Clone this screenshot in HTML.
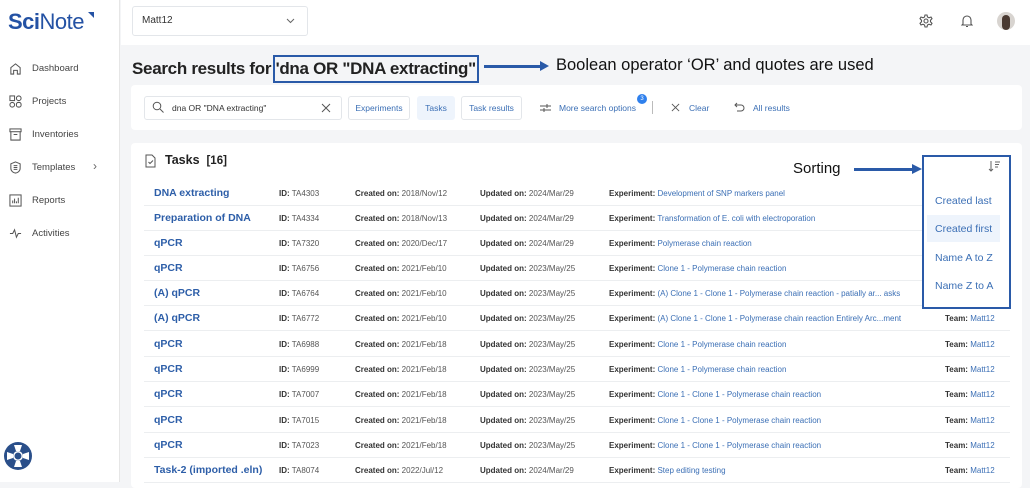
<!DOCTYPE html>
<html><head><meta charset="utf-8"><style>
*{margin:0;padding:0;box-sizing:border-box}
body{width:1030px;height:482px;overflow:hidden;background:#f4f5f7;font-family:"Liberation Sans",sans-serif;position:relative;color:#333}
.a{position:absolute;white-space:nowrap}
.side{position:absolute;left:0;top:0;width:120px;height:482px;background:#fff;border-right:1px solid #e6e6e6}
.nav{position:absolute;left:32px;font-size:9.5px;color:#444}
.ico{position:absolute;left:9px;width:13px;height:13px}
.top{position:absolute;left:121px;top:0;width:909px;height:45px;background:#fff}
.card{position:absolute;background:#fff;border-radius:4px}
.btn{position:absolute;top:96px;height:24px;border:1px solid #e3e6ea;border-radius:3px;font-size:8.5px;color:#3b6fb5;line-height:22px;text-align:center;background:#fff}
.row{position:absolute;left:144px;width:866px;height:25px;border-bottom:1px solid #eceef0;font-size:8px;color:#555}
.row span{position:absolute;top:8px;white-space:nowrap}
.row b{color:#333}
.nm{font-size:10.5px!important;font-weight:bold;color:#2d5ea8;top:6px!important;left:10px}
.lk{color:#3b6fb5;font-style:normal}
</style></head><body>
<div class="side">
<div class="a" style="left:8px;top:9px;font-size:22px;font-weight:bold;color:#2452a4;letter-spacing:-0.5px">Sci<span style="font-weight:normal">Note</span></div>
<div class="a" style="left:88px;top:12px;width:0;height:0;border-top:6px solid #2452a4;border-left:6px solid transparent"></div>
<svg class="ico" style="top:62px" viewBox="0 0 14 14" fill="none" stroke="#555" stroke-width="1.1"><path d="M2 13V6l5-4 5 4v7H9V9H5v4z"/></svg>
<div class="nav" style="top:63px">Dashboard</div>
<svg class="ico" style="top:95px" viewBox="0 0 14 14" fill="none" stroke="#555" stroke-width="1.1"><rect x="1" y="1" width="5" height="5"/><circle cx="10.5" cy="3.5" r="2.5"/><circle cx="3.5" cy="10.5" r="2.5"/><rect x="8" y="8" width="5" height="5" rx="2"/></svg>
<div class="nav" style="top:96px">Projects</div>
<svg class="ico" style="top:128px" viewBox="0 0 14 14" fill="none" stroke="#555" stroke-width="1.1"><rect x="1" y="1" width="12" height="3"/><path d="M2 4v9h10V4M5 7h4"/></svg>
<div class="nav" style="top:129px">Inventories</div>
<svg class="ico" style="top:161px" viewBox="0 0 14 14" fill="none" stroke="#555" stroke-width="1.1"><path d="M7 1l5 2v5c0 3-3 5-5 5s-5-2-5-5V3z M5 5h4M5 7h4M5 9h4"/></svg>
<div class="nav" style="top:162px">Templates</div>
<div class="a" style="left:93px;top:159px;font-size:12px;color:#666">›</div>
<svg class="ico" style="top:194px" viewBox="0 0 14 14" fill="none" stroke="#555" stroke-width="1.1"><rect x="1" y="1" width="12" height="12"/><path d="M4 10V7M6 10V5M8 10V8M10 10V4"/></svg>
<div class="nav" style="top:195px">Reports</div>
<svg class="ico" style="top:227px" viewBox="0 0 14 14" fill="none" stroke="#555" stroke-width="1.1"><path d="M1 7h3l2-4 2 8 2-4h3"/></svg>
<div class="nav" style="top:228px">Activities</div>
<svg class="a" style="left:3px;top:441px" width="30" height="30" viewBox="0 0 30 30"><circle cx="15" cy="15" r="14" fill="#2a4f8a"/><circle cx="15" cy="15" r="5" fill="#fff"/><g fill="#fff"><path d="M11 4h8l-2 6h-4zM11 26h8l-2-6h-4zM4 11v8l6-2v-4zM26 11v8l-6-2v-4z"/></g><circle cx="15" cy="15" r="3.5" fill="#2a4f8a"/></svg>
</div>
<div class="top">
<div class="a" style="left:11px;top:6px;width:176px;height:30px;border:1px solid #e3e6ea;border-radius:3px;font-size:10px;color:#333;line-height:28px;padding-left:9px">Matt12</div>
<svg class="a" style="left:165px;top:18px" width="9" height="6" viewBox="0 0 9 6" fill="none" stroke="#666"><path d="M1 1l3.5 3.5L8 1"/></svg>
<svg class="a" style="left:798px;top:14px" width="14" height="14" viewBox="0 0 14 14" fill="none" stroke="#555" stroke-width="1.1"><circle cx="7" cy="7" r="2"/><path d="M6 1h2l.5 2 1.5.8 2-.8 1 1.7-1.5 1.5v1.6l1.5 1.5-1 1.7-2-.8-1.5.8L8 13H6l-.5-2-1.5-.8-2 .8-1-1.7 1.5-1.5V6.2L1 4.7l1-1.7 2 .8 1.5-.8z"/></svg>
<svg class="a" style="left:840px;top:14px" width="12" height="14" viewBox="0 0 12 14" fill="none" stroke="#555" stroke-width="1.1"><path d="M2 10V6a4 4 0 018 0v4l1 1H1zM5 12.5h2"/></svg>
<div class="a" style="left:876px;top:12px;width:18px;height:18px;border-radius:50%;background:#d8d4d0;overflow:hidden"><div style="position:absolute;left:5px;top:3px;width:8px;height:15px;border-radius:4px;background:#4a3a32"></div></div>
</div>
<div class="a" style="left:132px;top:55px;font-size:17px;letter-spacing:-0.3px;font-weight:bold;color:#222">Search results for <span style="display:inline-block;border:2px solid #2a5aa8;padding:2px 1px;margin-left:-3px">'dna OR "DNA extracting"</span></div>
<div class="a" style="left:484px;top:65px;width:58px;height:2.5px;background:#2a5aa8"></div>
<div class="a" style="left:540px;top:61px;border-left:9px solid #2a5aa8;border-top:5px solid transparent;border-bottom:5px solid transparent"></div>
<div class="a" style="left:556px;top:56px;font-size:16.5px;color:#111">Boolean operator ‘OR’ and quotes are used</div>
<div class="card" style="left:131px;top:85px;width:891px;height:45px"></div>
<div class="a" style="left:144px;top:96px;width:198px;height:24px;border:1px solid #e3e6ea;border-radius:3px;background:#fff"></div>
<svg class="a" style="left:152px;top:101px" width="12" height="12" viewBox="0 0 12 12" fill="none" stroke="#555"><circle cx="5" cy="5" r="3.8"/><path d="M8 8l3.5 3.5"/></svg>
<div class="a" style="left:172px;top:103px;font-size:8.5px;color:#333">dna OR "DNA extracting"</div>
<svg class="a" style="left:321px;top:103px" width="10" height="10" viewBox="0 0 10 10" stroke="#555"><path d="M1 1l8 8M9 1l-8 8"/></svg>
<div class="btn" style="left:348px;width:62px">Experiments</div>
<div class="btn" style="left:417px;width:38px;background:#eef4fc;border-color:#eef4fc">Tasks</div>
<div class="btn" style="left:461px;width:61px">Task results</div>
<svg class="a" style="left:540px;top:103px" width="11" height="10" viewBox="0 0 11 10" fill="none" stroke="#555"><path d="M0 3h11M0 7h11M7 1v4M4 5v4"/></svg>
<div class="a" style="left:559px;top:103px;font-size:8.5px;color:#3b6fb5">More search options</div>
<div class="a" style="left:637px;top:94px;width:10px;height:10px;border-radius:50%;background:#2f80ed;color:#fff;font-size:6px;text-align:center;line-height:10px">3</div>
<div class="a" style="left:652px;top:101px;width:1px;height:13px;background:#bbb"></div>
<svg class="a" style="left:671px;top:103px" width="9" height="9" viewBox="0 0 10 10" stroke="#555"><path d="M1 1l8 8M9 1l-8 8"/></svg>
<div class="a" style="left:689px;top:103px;font-size:8.5px;color:#3b6fb5">Clear</div>
<svg class="a" style="left:734px;top:102px" width="11" height="10" viewBox="0 0 11 10" fill="none" stroke="#555"><path d="M3 1L1 3l2 2M1 3h6a3 3 0 010 6H3"/></svg>
<div class="a" style="left:753px;top:103px;font-size:8.5px;color:#3b6fb5">All results</div>
<div class="card" style="left:131px;top:143px;width:891px;height:345px"></div>
<svg class="a" style="left:145px;top:154px" width="11" height="14" viewBox="0 0 11 14" fill="none" stroke="#555"><path d="M1 1h6l3 3v9H1z M3.5 8l1.5 1.5L8 6.5"/></svg>
<div class="a" style="left:165px;top:153px;font-size:12.5px;font-weight:bold;color:#222">Tasks&nbsp; <span style="font-size:11.5px">[16]</span></div>
<div class="a" style="left:793px;top:160px;font-size:15px;color:#111">Sorting</div>
<div class="a" style="left:854px;top:168px;width:62px;height:3px;background:#2a5aa8"></div>
<div class="a" style="left:912px;top:164px;border-left:10px solid #2a5aa8;border-top:5.5px solid transparent;border-bottom:5.5px solid transparent"></div>

<div class="row" style="top:181px"><span class="nm">DNA extracting</span><span style="left:135px"><b>ID:</b> TA4303</span><span style="left:211px"><b>Created on:</b> 2018/Nov/12</span><span style="left:336px"><b>Updated on:</b> 2024/Mar/29</span><span style="left:465px"><b>Experiment:</b> <i class="lk">Development of SNP markers panel</i></span></div>
<div class="row" style="top:206px"><span class="nm">Preparation of DNA</span><span style="left:135px"><b>ID:</b> TA4334</span><span style="left:211px"><b>Created on:</b> 2018/Nov/13</span><span style="left:336px"><b>Updated on:</b> 2024/Mar/29</span><span style="left:465px"><b>Experiment:</b> <i class="lk">Transformation of E. coli with electroporation</i></span></div>
<div class="row" style="top:231px"><span class="nm">qPCR</span><span style="left:135px"><b>ID:</b> TA7320</span><span style="left:211px"><b>Created on:</b> 2020/Dec/17</span><span style="left:336px"><b>Updated on:</b> 2024/Mar/29</span><span style="left:465px"><b>Experiment:</b> <i class="lk">Polymerase chain reaction</i></span></div>
<div class="row" style="top:256px"><span class="nm">qPCR</span><span style="left:135px"><b>ID:</b> TA6756</span><span style="left:211px"><b>Created on:</b> 2021/Feb/10</span><span style="left:336px"><b>Updated on:</b> 2023/May/25</span><span style="left:465px"><b>Experiment:</b> <i class="lk">Clone 1 - Polymerase chain reaction</i></span></div>
<div class="row" style="top:281px"><span class="nm">(A) qPCR</span><span style="left:135px"><b>ID:</b> TA6764</span><span style="left:211px"><b>Created on:</b> 2021/Feb/10</span><span style="left:336px"><b>Updated on:</b> 2023/May/25</span><span style="left:465px"><b>Experiment:</b> <i class="lk">(A) Clone 1 - Clone 1 - Polymerase chain reaction - patially ar... asks</i></span></div>
<div class="row" style="top:306px"><span class="nm">(A) qPCR</span><span style="left:135px"><b>ID:</b> TA6772</span><span style="left:211px"><b>Created on:</b> 2021/Feb/10</span><span style="left:336px"><b>Updated on:</b> 2023/May/25</span><span style="left:465px"><b>Experiment:</b> <i class="lk">(A) Clone 1 - Clone 1 - Polymerase chain reaction Entirely Arc...ment</i></span><span style="left:801px"><b>Team:</b> <i class="lk">Matt12</i></span></div>
<div class="row" style="top:332px"><span class="nm">qPCR</span><span style="left:135px"><b>ID:</b> TA6988</span><span style="left:211px"><b>Created on:</b> 2021/Feb/18</span><span style="left:336px"><b>Updated on:</b> 2023/May/25</span><span style="left:465px"><b>Experiment:</b> <i class="lk">Clone 1 - Polymerase chain reaction</i></span><span style="left:801px"><b>Team:</b> <i class="lk">Matt12</i></span></div>
<div class="row" style="top:357px"><span class="nm">qPCR</span><span style="left:135px"><b>ID:</b> TA6999</span><span style="left:211px"><b>Created on:</b> 2021/Feb/18</span><span style="left:336px"><b>Updated on:</b> 2023/May/25</span><span style="left:465px"><b>Experiment:</b> <i class="lk">Clone 1 - Polymerase chain reaction</i></span><span style="left:801px"><b>Team:</b> <i class="lk">Matt12</i></span></div>
<div class="row" style="top:382px"><span class="nm">qPCR</span><span style="left:135px"><b>ID:</b> TA7007</span><span style="left:211px"><b>Created on:</b> 2021/Feb/18</span><span style="left:336px"><b>Updated on:</b> 2023/May/25</span><span style="left:465px"><b>Experiment:</b> <i class="lk">Clone 1 - Clone 1 - Polymerase chain reaction</i></span><span style="left:801px"><b>Team:</b> <i class="lk">Matt12</i></span></div>
<div class="row" style="top:408px"><span class="nm">qPCR</span><span style="left:135px"><b>ID:</b> TA7015</span><span style="left:211px"><b>Created on:</b> 2021/Feb/18</span><span style="left:336px"><b>Updated on:</b> 2023/May/25</span><span style="left:465px"><b>Experiment:</b> <i class="lk">Clone 1 - Clone 1 - Polymerase chain reaction</i></span><span style="left:801px"><b>Team:</b> <i class="lk">Matt12</i></span></div>
<div class="row" style="top:433px"><span class="nm">qPCR</span><span style="left:135px"><b>ID:</b> TA7023</span><span style="left:211px"><b>Created on:</b> 2021/Feb/18</span><span style="left:336px"><b>Updated on:</b> 2023/May/25</span><span style="left:465px"><b>Experiment:</b> <i class="lk">Clone 1 - Clone 1 - Polymerase chain reaction</i></span><span style="left:801px"><b>Team:</b> <i class="lk">Matt12</i></span></div>
<div class="row" style="top:458px"><span class="nm">Task-2 (imported .eln)</span><span style="left:135px"><b>ID:</b> TA8074</span><span style="left:211px"><b>Created on:</b> 2022/Jul/12</span><span style="left:336px"><b>Updated on:</b> 2024/Mar/29</span><span style="left:465px"><b>Experiment:</b> <i class="lk">Step editing testing</i></span><span style="left:801px"><b>Team:</b> <i class="lk">Matt12</i></span></div>

<div class="a" style="left:922px;top:155px;width:89px;height:154px;border:2px solid #2a5aa8;background:#fff"></div>
<svg class="a" style="left:988px;top:160px" width="13" height="12" viewBox="0 0 13 12" fill="none" stroke="#666"><path d="M3 1v10M1 9l2 2 2-2M7 2h5M7 4.5h4M7 7h3"/></svg>
<div class="a" style="left:927px;top:215px;width:73px;height:27px;background:#eef4fc"></div>
<div class="a" style="left:935px;top:195px;font-size:10.5px;color:#3b6fb5">Created last</div>
<div class="a" style="left:935px;top:223px;font-size:10.5px;color:#3b6fb5">Created first</div>
<div class="a" style="left:935px;top:252px;font-size:10.5px;color:#3b6fb5">Name A to Z</div>
<div class="a" style="left:935px;top:280px;font-size:10.5px;color:#3b6fb5">Name Z to A</div>
</body></html>
